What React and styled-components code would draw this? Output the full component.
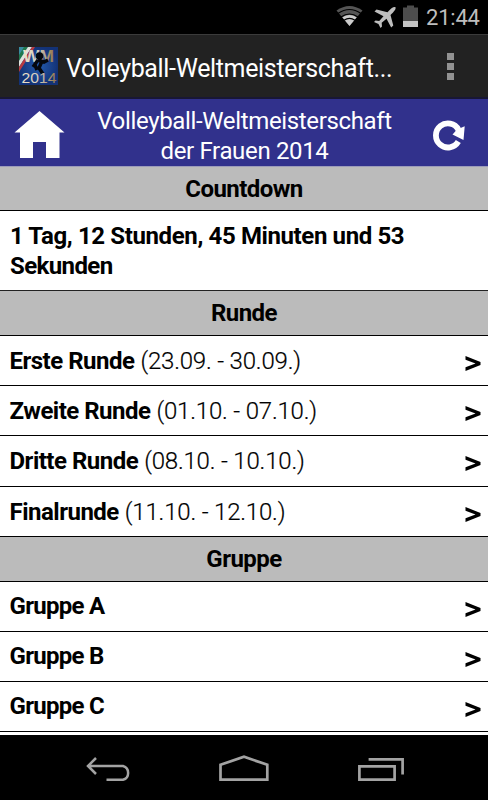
import React from 'react';
import styled, { createGlobalStyle } from 'styled-components';

const GlobalStyle = createGlobalStyle`
  * {
    box-sizing: border-box;
  }

  body {
    margin: 0;
    background: #000;
    font-family: Roboto, sans-serif;
  }
`;

const Screen = styled.div`
  width: 488px;
  height: 800px;
  display: flex;
  overflow: hidden;
  background: #fff;
  flex-direction: column;
`;

const StatusBar = styled.div`
  height: 34px;
  display: flex;
  flex: none;
  color: #bebebe;
  background: #000;
  padding-right: 7px;
  align-items: center;
  justify-content: flex-end;
`;

const Clock = styled.span`
  width: 55px;
  font-size: 22px;
  line-height: 34px;
  margin-left: 7px;
  padding-top: 1px;
  white-space: nowrap;
  letter-spacing: -0.2px;
`;

const ActionBar = styled.div`
  height: 65px;
  flex: none;
  display: flex;
  color: #fff;
  background: #222;
  padding: 0 31px 0 19px;
  align-items: center;
  border-top: 1px solid #3b3b3b;
  border-bottom: 2px solid #181735;
`;

const AppTitle = styled.span`
  flex: 1;
  font-size: 25px;
  margin-left: 8px;
  padding-top: 5px;
  white-space: nowrap;
  letter-spacing: ${(props) => props.$spacing}px;
`;

const Overflow = styled.div`
  width: 10px;
  display: grid;
  row-gap: 3px;

  i {
    width: 7px;
    height: 7px;
    background: #929292;
  }
`;

const Header = styled.header`
  height: 68px;
  flex: none;
  display: flex;
  color: #fff;
  background: #31318c;
  padding: 4px 22px 0 14px;
  align-items: center;
  justify-content: space-between;
  border-bottom: 1px solid #9c9cba;
`;

const Heading = styled.h1`
  flex: 1;
  margin: 0;
  padding-right: 9px;
  padding-top: 3px;
  font-size: 24px;
  font-weight: 400;
  line-height: 30px;
  padding-bottom: 1px;
  text-align: center;
  white-space: nowrap;

  span {
    display: block;
    letter-spacing: -0.35px;
  }
`;

const Section = styled.h2`
  margin: 0;
  flex: none;
  color: #000;
  height: ${(props) => props.$height || 45}px;
  font-size: 24px;
  font-weight: 700;
  line-height: 45px;
  text-align: center;
  background: #bbb;
  border-bottom: 1px solid #000;
  letter-spacing: -0.55px;
`;

const Countdown = styled.div`
  height: 80px;
  flex: none;
  color: #000;
  padding: 10px;
  font-size: 24px;
  font-weight: 700;
  line-height: 30px;
  white-space: nowrap;
  border-bottom: 1px solid #222;

  span {
    display: block;
    letter-spacing: -0.38px;
  }

  span:last-child {
    letter-spacing: -0.6px;
  }
`;

const Row = styled.div`
  height: ${(props) => props.$height || 50}px;
  flex: none;
  display: flex;
  color: #000;
  font-size: 24px;
  line-height: ${(props) => props.$line || 50}px;
  padding: 0 7px 0 9.5px;
  white-space: nowrap;
  border-bottom: 1px solid #000;
  justify-content: space-between;
`;

const Name = styled.b`
  font-weight: 700;
  letter-spacing: ${(props) => props.$spacing || -0.5}px;
`;

const Dates = styled.span`
  font-weight: 300;
  margin-left: 6px;
  letter-spacing: -0.18px;
  -webkit-text-stroke: 0.2px #000;
`;

const Arrow = styled.svg`
  width: 16px;
  height: 15px;
  margin-top: 20px;
`;

const Filler = styled.div`
  flex: 1;
`;

const NavBar = styled.nav`
  height: 65px;
  flex: none;
  display: flex;
  background: #000;
  padding: 2px 83px 0 85px;
  align-items: center;
`;

const Key = styled.svg`
  height: 28px;
  width: ${(props) => props.$width}px;
  margin-right: ${(props) => props.$gap || 0}px;
`;

const ROUNDS = [
  { name: 'Erste Runde', dates: '(23.09. - 30.09.)' },
  { name: 'Zweite Runde', dates: '(01.10. - 07.10.)' },
  { name: 'Dritte Runde', dates: '(08.10. - 10.10.)', height: 51 },
  { name: 'Finalrunde', dates: '(11.10. - 12.10.)' },
];

const GROUPS = ['Gruppe A', 'Gruppe B', 'Gruppe C'];

const StatusIcons = () => (
  <svg width="84" height="34" viewBox="335 0 84 34">
    <path d="M336.500 10.500Q349.500 1.500 362.500 10.500L349.500 26Z" fill="#555" />
    <path d="M342.300 17.300Q349.500 12.500 356.700 17.300L349.500 26Z" fill="#ccc" />
    <g fill="none" stroke="#000" strokeWidth="1.200">
      <path d="M338 13.500Q349.500 5.500 361 13.500" />
      <path d="M341 17Q349.500 11 358 17" />
      <path d="M344 20.300Q349.500 16.500 355 20.300" />
    </g>
    <path d="M395.500 7.200C393.500 6.500 391 8.500 387.500 12.200L376.500 9.500L374.500 11.500L383.500 16.200L379.200 21L375.500 20.500L374 22L378.500 24L380.500 28L382 26.500L381.700 22.800L386.500 18.700L391.200 27.500L393.300 25.500L390.500 15C394 11.700 396.200 9 395.500 7.200Z" fill="#bebebe" />
    <path d="M403 7.500h4V5.500h7v2h4v19h-15z" fill="#4d4d4d" />
    <path d="M403 21h15v6h-15z" fill="#c4c4c4" />
  </svg>
);

const AppIcon = () => (
  <svg width="39" height="38" viewBox="0 0 39 38">
    <defs>
      <radialGradient id="tile">
        <stop offset="0" stopColor="#245bae" />
        <stop offset="1" stopColor="#133276" />
      </radialGradient>
      <linearGradient id="gold" x2="1">
        <stop offset="0" stopColor="#eee3c8" />
        <stop offset="0.500" stopColor="#d2cbbd" />
        <stop offset="1" stopColor="#907445" />
      </linearGradient>
    </defs>
    <rect width="39" height="38" fill="url(#tile)" />
    <path d="M0 0H10L0 15Z" fill="#398ba0" />
    <path d="M5 0H9L0 14V8Z" fill="#22784d" />
    <path d="M9 0H13L0 20V14Z" fill="#e2e2dc" />
    <path d="M13 0H16L0 25V20Z" fill="#b83b40" />
    <text x="4" y="14.500" fontFamily="Liberation Sans" fontSize="16" fontWeight="700" fill="url(#gold)" textLength="31" lengthAdjust="spacingAndGlyphs">WM</text>
    <circle cx="20.500" cy="9" r="3.800" fill="#05080e" />
    <path d="M19 13L25 15L29 13M19 13L14 20M23 14L20 21L24 27M16 18L18 23" fill="none" stroke="#05080e" strokeWidth="3.500" />
    <text x="2.500" y="36" fontFamily="Liberation Sans" fontSize="15" fill="url(#gold)" textLength="35" lengthAdjust="spacingAndGlyphs">2014</text>
  </svg>
);

const HomeIcon = () => (
  <svg width="51" height="48" viewBox="0 0 51 48">
    <path d="M25.500 0L50.500 21.500H45.500V47H32V31H19V47H6V21.500H0.500Z" fill="#fff" />
  </svg>
);

const ReloadIcon = () => (
  <svg width="33" height="34" viewBox="0 -2.500 33 34">
    <path d="M25.300 21A12 12 0 1 1 25.500 9.300" fill="none" stroke="#fff" strokeWidth="5.800" />
    <path d="M31.700 5.800L30.500 19.500L19.500 14L24 9Z" fill="#fff" />
  </svg>
);

const BackIcon = () => (
  <Key $width={48} $gap={86} viewBox="84.5 755 48 28" fill="none" stroke="#a3a3a3" strokeWidth="2.500">
    <path d="M95.500 758L87.500 766L95.500 774M88 766H122.500A7.200 7.200 0 0 1 122.500 779.800H106" />
  </Key>
);

const HomeKey = () => (
  <Key $width={50} $gap={89} viewBox="219 755 50 28" fill="none" stroke="#a3a3a3" strokeWidth="2.700">
    <path d="M220.500 764.800L244 756.800L267.300 764.800V779.700H220.500Z" />
  </Key>
);

const RecentIcon = () => (
  <Key $width={47} viewBox="358 755 47 28" fill="none" stroke="#a3a3a3" strokeWidth="2.700">
    <path d="M359.400 766.300H394.600V779.700H359.400ZM368.600 759.400H402.600V774.500" />
  </Key>
);

const Chevron = () => (
  <Arrow viewBox="0 0 16 15">
    <path d="M0.500 0L15.500 6V9L0.500 15V11.300L10.500 7.500L0.500 3.700Z" />
  </Arrow>
);

const App = () => (
  <>
    <GlobalStyle />
    <Screen>
      <StatusBar>
        <StatusIcons />
        <Clock>21:44</Clock>
      </StatusBar>
      <ActionBar>
        <AppIcon />
        <AppTitle $spacing={-0.34}>Volleyball-Weltmeisterschaft...</AppTitle>
        <Overflow>
          <i />
          <i />
          <i />
        </Overflow>
      </ActionBar>
      <Header>
        <HomeIcon />
        <Heading>
          <span>Volleyball-Weltmeisterschaft</span>
          <span>der Frauen 2014</span>
        </Heading>
        <ReloadIcon />
      </Header>
      <Section $height={44}>Countdown</Section>
      <Countdown>
        <span>1 Tag, 12 Stunden, 45 Minuten und 53</span>
        <span>Sekunden</span>
      </Countdown>
      <Section>Runde</Section>
      {ROUNDS.map(({ name, dates, height }) => (
        <Row key={name} $height={height}>
          <div>
            <Name>{name}</Name>
            <Dates>{dates}</Dates>
          </div>
          <Chevron />
        </Row>
      ))}
      <Section>Gruppe</Section>
      {GROUPS.map((name) => (
        <Row key={name} $line={49}>
          <Name $spacing={-0.7}>{name}</Name>
          <Chevron />
        </Row>
      ))}
      <Filler />
      <NavBar>
        <BackIcon />
        <HomeKey />
        <RecentIcon />
      </NavBar>
    </Screen>
  </>
);

export default App;
